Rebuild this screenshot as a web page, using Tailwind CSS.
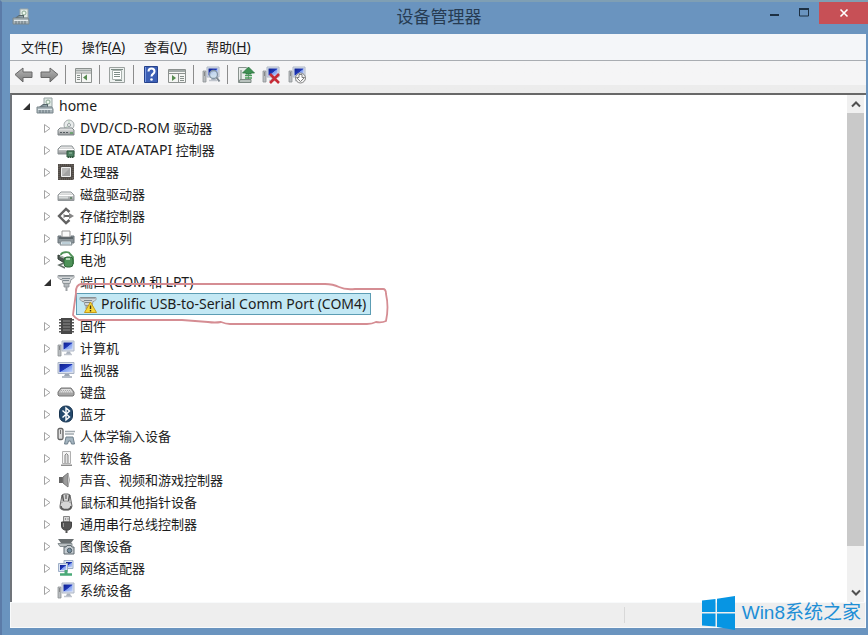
<!DOCTYPE html>
<html lang="zh-CN">
<head>
    <meta charset="UTF-8">
    <meta name="viewport" content="width=device-width, initial-scale=1.0">
    <title>设备管理器</title>
    <script src="https://cdn.jsdelivr.net/npm/@tailwindcss/browser@4"></script>
</head>
<body class="font-['Noto_Sans','Noto_Sans_CJK_SC',sans-serif] text-[13px] text-[#1c1c1c]">

    <!-- Shared icon shapes -->
    <svg class="absolute size-0" aria-hidden="true">
        <defs>
            <linearGradient id="metal" x1="0" y1="0" x2="0" y2="1"><stop offset="0" stop-color="#f4f4f4"/><stop offset="1" stop-color="#8e9294"/></linearGradient>
            <linearGradient id="screen" x1="0" y1="0" x2="1" y2="1"><stop offset="0" stop-color="#0c1f8c"/><stop offset=".5" stop-color="#2038b8"/><stop offset=".55" stop-color="#7f9df0"/><stop offset="1" stop-color="#c3d3fa"/></linearGradient>
            <linearGradient id="arrow-fill" x1="0" y1="0" x2="0" y2="1"><stop offset="0" stop-color="#b5b5b5"/><stop offset="1" stop-color="#7c7c7c"/></linearGradient>
        </defs>
        <symbol id="closed" viewBox="0 0 9 11"><path d="M1.5 1.5L7 5.5L1.5 9.5Z" fill="#fff" stroke="#a3a3a3"/></symbol>
        <symbol id="open" viewBox="0 0 9 11"><path d="M8 2V9H1Z" fill="#303030"/></symbol>
        <symbol id="pc" viewBox="0 0 18 18">
            <path d="M8 1h8v9H8z" fill="#dfe8e4" stroke="#9aa6a6"/><circle cx="12" cy="5" r="2" fill="#eef7ef" stroke="#8aa893"/>
            <path d="M3 10l4-3h5v4H3z" fill="#566469"/><path d="M5 9l3-1h3v2z" fill="#8fa3a8"/>
            <path d="M1 10h15l1 2v4H1z" fill="#aab6bb" stroke="#7b878c"/><path d="M2 12.500h14" stroke="#e3eaec"/><path d="M4 13v3M7 13v3M10 13v3M13 13v3" stroke="#66757c"/>
        </symbol>
        <symbol id="tower" viewBox="0 0 18 18">
            <path d="M1 6h3v11H1z" fill="#b9bdc0" stroke="#8d9294" stroke-width=".8"/><path d="M2 8h1M2 10h1" stroke="#555"/>
            <path d="M5 2h12v10H5z" fill="#dbe2ee" stroke="#aeb7c6"/><path d="M6.500 3.500h9v7h-9z" fill="url(#screen)"/>
            <path d="M10 12.500h3l1 2.500H9z" fill="#a9b1bd"/><path d="M7 15.500h8" stroke="#c1c6ce" stroke-width="1.500"/>
        </symbol>
        <symbol id="serial" viewBox="0 0 18 18">
            <path d="M1 2.500h16v2l-2 2h-1l-1 4H6l-1-4H3L1 4.500z" fill="#d3d6d8" stroke="#969b9f"/>
            <path d="M2 3h14" stroke="#7d8387"/><path d="M5 5.500h8M6 7.500h6" stroke="#7f8a91"/>
            <path d="M7 10.500h5V14H7z" fill="#b3b8bb" stroke="#8a9094" stroke-width=".8"/><path d="M9.500 14v4" stroke="#9da1a4" stroke-width="2"/>
        </symbol>
    </svg>

    <div class="relative flex h-screen flex-col overflow-hidden border-t-2 border-l-2 border-t-[#7f9fb4] border-l-[#5b7ba8] bg-[#6a94bf] pb-[7px] pl-2 pr-0.5">

        <!-- Title bar -->
        <header class="-mr-0.5 grid h-8 grid-cols-[1fr_auto_1fr] text-[#263b52]">
            <svg class="ml-0.5 mt-1.5 size-[18px]"><use href="#pc"/></svg>
            <h1 class="text-[17px] leading-[30px]">设备管理器</h1>
            <div class="flex items-start justify-end">
                <button aria-label="最小化" class="flex h-[22px] w-[30px] items-center justify-center"><svg width="12" height="12"><path d="M2 8h9" stroke="#1d3043" stroke-width="2"/></svg></button>
                <button aria-label="最大化" class="flex h-[22px] w-[30px] items-center justify-center"><svg width="12" height="12"><path d="M1.500 2h9v7h-9z" fill="none" stroke="#1d3043"/><path d="M1 2h10" stroke="#1d3043" stroke-width="2"/></svg></button>
                <button aria-label="关闭" class="flex h-[22px] w-[49px] items-center justify-center bg-[#c75056]"><svg width="10" height="10"><path d="M1.500 1.500l7 7M8.500 1.500l-7 7" stroke="#fff" stroke-width="1.600"/></svg></button>
            </div>
        </header>

        <!-- Menu bar -->
        <nav class="flex h-[27px] shrink-0 items-center gap-[19px] border-b border-[#a9adb2] bg-[#f4f6f9] pl-[11px]">
            <button>文件<span class="text-sm">(<u>F</u>)</span></button>
            <button>操作<span class="text-sm">(<u>A</u>)</span></button>
            <button>查看<span class="text-sm">(<u>V</u>)</span></button>
            <button>帮助<span class="text-sm">(<u>H</u>)</span></button>
        </nav>

        <!-- Toolbar -->
        <div role="toolbar" class="flex h-8 shrink-0 items-start gap-1.5 bg-linear-to-b from-[#f5f5f6] from-75% to-[#ececec] to-75% pl-[3px] pt-1">
            <button aria-label="后退"><svg class="size-5" viewBox="0 0 20 20"><path d="M2 9.500L10 3v4h9v5.500h-9V17z" fill="url(#arrow-fill)" stroke="#686868"/></svg></button>
            <button aria-label="前进"><svg class="size-5" viewBox="0 0 20 20"><path d="M19 9.500L11 3v4H2v5.500h9V17z" fill="url(#arrow-fill)" stroke="#686868"/></svg></button>
            <span class="h-[19px] w-0.5 border-l border-[#8c8c8c]"></span>
            <button aria-label="显示/隐藏控制台树"><svg class="size-5" viewBox="0 0 20 20"><path d="M2.500 3.500h16v14h-16z" fill="#f5f6f4" stroke="#8c918f"/><path d="M3 5.500h15" stroke="#a2aaa8" stroke-width="2"/><path d="M3 8h15M8.500 8v9" stroke="#8c918f"/><path d="M4 10.500h3M4 12.500h3M4 14.500h3" stroke="#87908c"/><path d="M14 9.500v6l-4-3z" fill="#568b4f"/></svg></button>
            <span class="h-[19px] w-0.5 border-l border-[#8c8c8c]"></span>
            <button aria-label="属性"><svg class="size-5" viewBox="0 0 20 20"><path d="M2.500 2.500h15v15h-15z" fill="#edf1ef" stroke="#9ba19f"/><path d="M5.500 5.500h9v9h-9z" fill="#fff" stroke="#a8b1ad"/><path d="M4 4.500h12M7 7.500h6M7 9.500h6M7 11.500h6M8 15.500h7" stroke="#7d8c86"/></svg></button>
            <span class="h-[19px] w-0.5 border-l border-[#8c8c8c]"></span>
            <button aria-label="帮助"><svg class="size-5" viewBox="0 0 20 20"><path d="M3.500 1.500h13v16h-13z" fill="#3c5fb5" stroke="#26428c"/><path d="M4.500 2v15" stroke="#7b9ae0"/><path d="M7.500 6.500c0-4 6-4 6 0c0 2.500-3 2.300-3 5" fill="none" stroke="#fff" stroke-width="2"/><circle cx="10.500" cy="14.500" r="1.300" fill="#fff"/></svg></button>
            <button aria-label="操作窗格"><svg class="size-5" viewBox="0 0 20 20"><path d="M1.500 4.500h17v13h-17z" fill="#f5f6f4" stroke="#8c918f"/><path d="M2 6h16" stroke="#a2aaa8" stroke-width="2"/><path d="M2 8.500h16M11.500 9v8" stroke="#8c918f"/><path d="M13 11.500h4M13 13.500h4M13 15.500h4" stroke="#87908c"/><path d="M5 10v6l4-3z" fill="#568b4f"/></svg></button>
            <span class="h-[19px] w-0.5 border-l border-[#8c8c8c]"></span>
            <button aria-label="扫描检测硬件改动"><svg class="size-5" viewBox="0 0 20 20"><use href="#tower" width="18" height="18" x="1"/><circle cx="12.500" cy="9.500" r="4" fill="#cfe0ee" fill-opacity=".85" stroke="#8293a4" stroke-width="1.300"/><path d="M15.500 12.500l3 4" stroke="#7d8790" stroke-width="2"/></svg></button>
            <span class="h-[19px] w-0.5 border-l border-[#8c8c8c]"></span>
            <button aria-label="更新驱动程序"><svg class="size-5" viewBox="0 0 20 20"><path d="M3.500 2.500h8l2 2v13h-10z" fill="#e9edeb" stroke="#89928e"/><path d="M5 14.500h11v3H4z" fill="#b9c2be" stroke="#7c8983"/><path d="M6 5v9" stroke="#adb8b2" stroke-width="2"/><path d="M13.500 2L19.500 8h-3.500v1H11V8H7.500z" fill="#3e9152" stroke="#2b7240" stroke-width=".8"/><path d="M10 10.500h7M10 13h7" stroke="#479c5a" stroke-width="1.600"/></svg></button>
            <button aria-label="卸载"><svg class="size-5" viewBox="0 0 20 20"><use href="#tower" width="18" height="18" x="1"/><path d="M9 9l9 9M18 9l-9 9" stroke="#c72c37" stroke-width="2.600"/></svg></button>
            <button aria-label="禁用"><svg class="size-5" viewBox="0 0 20 20"><use href="#tower" width="18" height="18" x="1"/><circle cx="13.500" cy="13" r="5" fill="#f0f0f0" stroke="#858585"/><path d="M12 9.500h3v3h2.500l-4 4l-4-4H12z" fill="#fff" stroke="#747474" stroke-width=".9"/></svg></button>
        </div>

        <!-- Device tree -->
        <main class="flex min-h-0 flex-1 overflow-hidden border-t-2 border-l-2 border-t-[#686868] border-l-[#70747a] bg-white">
            <ul role="tree" class="min-w-0 flex-1 leading-[22px] [&_button]:shrink-0">
                <li class="flex h-[22px] items-center gap-[5px] pl-[10px] text-sm"><button aria-label="折叠 home"><svg class="h-[11px] w-[9px]"><use href="#open"/></svg></button><svg class="size-[18px]"><use href="#pc"/></svg>home</li>
                <li class="flex h-[22px] items-center gap-[5px] pl-[31px]"><button aria-label="展开"><svg class="h-[11px] w-[9px]"><use href="#closed"/></svg></button>
                    <svg class="size-[18px]" viewBox="0 0 18 18"><circle cx="12" cy="6" r="5" fill="#e9ecec" stroke="#a4abac"/><circle cx="12" cy="6" r="1.500" fill="#fff" stroke="#929b9e"/><path d="M12 1v3M8 9l3-2" stroke="#b9d2bd"/><path d="M1 11l2-2h12l2 2v5H1z" fill="url(#metal)" stroke="#7e8588"/><path d="M3 13.500h9" stroke="#545c60" stroke-dasharray="2 1"/><path d="M13 14h3" stroke="#5d9f61" stroke-width="1.500"/></svg><p><span class="text-sm leading-5">DVD/CD-ROM</span> 驱动器</p></li>
                <li class="flex h-[22px] items-center gap-[5px] pl-[31px]"><button aria-label="展开"><svg class="h-[11px] w-[9px]"><use href="#closed"/></svg></button>
                    <svg class="size-[18px]" viewBox="0 0 18 18"><path d="M1 8l3-3h11l2 3v5H1z" fill="url(#metal)" stroke="#899092"/><path d="M2 8.500h15" stroke="#fff"/><path d="M10 10h7v6h-7z" fill="#4e8062" stroke="#31583f"/><path d="M11.500 15v2M13.500 15v2M15.500 15v2" stroke="#31583f"/><path d="M12 12h3" stroke="#a0c8aa"/></svg><p><span class="text-sm leading-5">IDE ATA/ATAPI</span> 控制器</p></li>
                <li class="flex h-[22px] items-center gap-[5px] pl-[31px]"><button aria-label="展开"><svg class="h-[11px] w-[9px]"><use href="#closed"/></svg></button>
                    <svg class="size-[18px]" viewBox="0 0 18 18"><path d="M1 1h16v15l-1 1H1z" fill="#504b47"/><path d="M2 2h14v14H2z" fill="none" stroke="#777069" stroke-dasharray="1 1"/><path d="M4.500 4.500h9v9h-9z" fill="#b9b9b8" stroke="#efefef"/><path d="M5 13L13 5v8z" fill="#a3a3a3"/></svg>处理器</li>
                <li class="flex h-[22px] items-center gap-[5px] pl-[31px]"><button aria-label="展开"><svg class="h-[11px] w-[9px]"><use href="#closed"/></svg></button>
                    <svg class="size-[18px]" viewBox="0 0 18 18"><path d="M1 10l3-3h10l3 3v5.500H1z" fill="url(#metal)" stroke="#92979a"/><path d="M2 10.500h14" stroke="#fff"/><path d="M2 12.500h9" stroke="#d7dada" stroke-width="2"/><path d="M13 13h2" stroke="#557d5a" stroke-width="1.500"/></svg>磁盘驱动器</li>
                <li class="flex h-[22px] items-center gap-[5px] pl-[31px]"><button aria-label="展开"><svg class="h-[11px] w-[9px]"><use href="#closed"/></svg></button>
                    <svg class="size-[18px]" viewBox="0 0 18 18"><path d="M12.500 5L9 1.800L2 9l7 7.200l3.500-3.200" fill="none" stroke="#626262" stroke-width="2.400"/><path d="M7 9h6" stroke="#656565" stroke-width="2"/><path d="M12 6l5 3l-5 3z" fill="#858585"/><path d="M7 7v4" stroke="#888"/></svg>存储控制器</li>
                <li class="flex h-[22px] items-center gap-[5px] pl-[31px]"><button aria-label="展开"><svg class="h-[11px] w-[9px]"><use href="#closed"/></svg></button>
                    <svg class="size-[18px]" viewBox="0 0 18 18"><path d="M5 2h8v6H5z" fill="#fafafa" stroke="#999"/><path d="M1 7h3v2h10V7h3v7H1z" fill="#8c959a" stroke="#697278"/><path d="M2 9h14" stroke="#50585d" stroke-width="1.500"/><path d="M4 12h10l1 4H3z" fill="#e1e9ec" stroke="#7c888e"/><path d="M5 14h8" stroke="#98b4c2"/></svg>打印队列</li>
                <li class="flex h-[22px] items-center gap-[5px] pl-[31px]"><button aria-label="展开"><svg class="h-[11px] w-[9px]"><use href="#closed"/></svg></button>
                    <svg class="size-[18px]" viewBox="0 0 18 18"><path d="M1 4l11 5l-3 4L1 8z" fill="#4c5751" stroke="#303c35"/><path d="M3 5l7 3" stroke="#aab5ad" stroke-width="1.500"/><path d="M4 4c0-3 8-4 9-1l3 3v7" fill="none" stroke="#4f9156" stroke-width="1.800"/><rect x="7" y="6" width="9" height="10" rx="3" fill="#4e9258" stroke="#2c6536"/><path d="M9 8h4" stroke="#b2d6b6" stroke-width="2"/><path d="M7 12l-5 2l6 3" fill="none" stroke="#647069" stroke-width="1.500"/></svg>电池</li>
                <li class="flex h-[22px] items-center gap-[5px] pl-[31px]"><button aria-label="折叠"><svg class="h-[11px] w-[9px]"><use href="#open"/></svg></button>
                    <svg class="size-[18px]"><use href="#serial"/></svg><p>端口 <span class="text-sm leading-5">(COM</span> 和 <span class="text-sm leading-5">LPT)</span></p></li>
                <li class="relative flex h-[22px] items-center pl-16">
                    <div aria-selected="true" role="treeitem" class="flex h-[22px] items-center gap-1 border border-[#5c9db4] bg-[#c3e8f4] pl-0.5 pr-1 text-sm leading-5">
                        <svg class="size-[18px]" viewBox="0 0 18 18"><use href="#serial"/><path d="M11.500 7l6 10.500h-12z" fill="#f7d83b" stroke="#c69a1a"/><path d="M11.500 10.500v3.500M11.500 15v1.500" stroke="#3e3514" stroke-width="1.400"/></svg>Prolific USB-to-Serial Comm Port (COM4)
                    </div>
                    <!-- Hand drawn marker around the port -->
                    <svg class="pointer-events-none absolute -top-3 left-[58px] h-[46px] w-[324px]" viewBox="0 0 324 46" fill="none" stroke="#d58d93" stroke-width="1.800"><path d="M6 14Q5 4 11 3H255Q263 3 269 6T285 8H313Q316 8 316 13Q319 26 316 40Q312 42 306 41Q302 43 297 43H160Q156 43 151 41Q145 42 138 41L112 39H9Q5 37 3 34Q4 26 6 12"/></svg>
                </li>
                <li class="flex h-[22px] items-center gap-[5px] pl-[31px]"><button aria-label="展开"><svg class="h-[11px] w-[9px]"><use href="#closed"/></svg></button>
                    <svg class="size-[18px]" viewBox="0 0 18 18"><path d="M4 1h11v16H4z" fill="#484848"/><path d="M3 2v15M16 2v15" stroke="#555" stroke-width="2" stroke-dasharray="1.500 1.500"/><path d="M6 4h7M6 7h7M6 10h7M6 13h7" stroke="#8d8d8d"/></svg>固件</li>
                <li class="flex h-[22px] items-center gap-[5px] pl-[31px]"><button aria-label="展开"><svg class="h-[11px] w-[9px]"><use href="#closed"/></svg></button>
                    <svg class="size-[18px]"><use href="#tower"/></svg>计算机</li>
                <li class="flex h-[22px] items-center gap-[5px] pl-[31px]"><button aria-label="展开"><svg class="h-[11px] w-[9px]"><use href="#closed"/></svg></button>
                    <svg class="size-[18px]" viewBox="0 0 18 18"><path d="M1 1.500h16v11H1z" fill="#d9e0ec" stroke="#a9b3c5"/><path d="M2.500 3h13v8h-13z" fill="url(#screen)"/><path d="M8 13h4l1 2H7z" fill="#9da6b3"/><path d="M5 16h10" stroke="#b5bcc6" stroke-width="2"/></svg>监视器</li>
                <li class="flex h-[22px] items-center gap-[5px] pl-[31px]"><button aria-label="展开"><svg class="h-[11px] w-[9px]"><use href="#closed"/></svg></button>
                    <svg class="size-[18px]" viewBox="0 0 18 18"><path d="M1 9l3-4h10l3 4v3l-1 1H2l-1-1z" fill="#a6a6a6" stroke="#777"/><path d="M2 9.500l2.500-3.500h9L16 9.500z" fill="#dedede"/><path d="M4 7.500h10M3 9h12" stroke="#a8a8a8" stroke-dasharray="1 1"/></svg>键盘</li>
                <li class="flex h-[22px] items-center gap-[5px] pl-[31px]"><button aria-label="展开"><svg class="h-[11px] w-[9px]"><use href="#closed"/></svg></button>
                    <svg class="size-[18px]" viewBox="0 0 18 18"><rect x="2.500" y="1" width="13" height="16" rx="6" fill="#24496c" stroke="#17334f"/><path d="M5.500 5.500l7 6.500L9 15V3l3.500 3l-7 6.500" fill="none" stroke="#fff" stroke-width="1.400"/></svg>蓝牙</li>
                <li class="flex h-[22px] items-center gap-[5px] pl-[31px]"><button aria-label="展开"><svg class="h-[11px] w-[9px]"><use href="#closed"/></svg></button>
                    <svg class="size-[18px]" viewBox="0 0 18 18"><rect x="1" y="1.500" width="5" height="11" rx="1.500" fill="#dedede" stroke="#626262" stroke-width="1.300"/><path d="M3.500 3v4" stroke="#757575"/><path d="M8 4.500h10M8 7h9" stroke="#a1a9ae" stroke-width="1.500"/><path d="M9 10h7l1.500 7h-3l-1-3h-2l-1 3h-3z" fill="#a4b4bf" stroke="#70818d"/></svg>人体学输入设备</li>
                <li class="flex h-[22px] items-center gap-[5px] pl-[31px]"><button aria-label="展开"><svg class="h-[11px] w-[9px]"><use href="#closed"/></svg></button>
                    <svg class="size-[18px]" viewBox="0 0 18 18"><path d="M5.500 2.500h8v12h-8z" fill="#f4f4f4" stroke="#b0b0b0"/><path d="M8 14V6q1.500-3 3 0v8" fill="#dedede" stroke="#858585"/><path d="M4 15.500h11v1.500H4z" fill="#8d8d8d"/></svg>软件设备</li>
                <li class="flex h-[22px] items-center gap-[5px] pl-[31px]"><button aria-label="展开"><svg class="h-[11px] w-[9px]"><use href="#closed"/></svg></button>
                    <svg class="size-[18px]" viewBox="0 0 18 18"><path d="M2 6h4v6H2z" fill="#646464"/><path d="M6 6l5-4v14l-5-4z" fill="#9b9b9b" stroke="#777"/><path d="M11 3q3 6 0 12" fill="#d6d6d6" stroke="#aaa"/></svg>声音、视频和游戏控制器</li>
                <li class="flex h-[22px] items-center gap-[5px] pl-[31px]"><button aria-label="展开"><svg class="h-[11px] w-[9px]"><use href="#closed"/></svg></button>
                    <svg class="size-[18px]" viewBox="0 0 18 18"><path d="M5 2l2-1h4l2 1l2 11q0 3-3 4H6q-4-1-3-4z" fill="#d5d5d5" stroke="#666"/><path d="M5.500 2l1 6M12.500 2l-1 6" stroke="#555" stroke-width="1.500"/><path d="M9 2v4" stroke="#707070" stroke-width="1.500"/><path d="M4 10q5-4 10 0" fill="none" stroke="#999"/><path d="M4 13q0 3 3 3.500h4q3-.5 3-3.500" fill="none" stroke="#595959" stroke-width="1.500"/></svg>鼠标和其他指针设备</li>
                <li class="flex h-[22px] items-center gap-[5px] pl-[31px]"><button aria-label="展开"><svg class="h-[11px] w-[9px]"><use href="#closed"/></svg></button>
                    <svg class="size-[18px]" viewBox="0 0 18 18"><path d="M6.500 1.500h6V7h-6z" fill="#d7d7d7" stroke="#858585"/><path d="M8 4h1M10.500 4h1" stroke="#555"/><path d="M4.500 7h10v4q0 3-3 4h-4q-3-1-3-4z" fill="#555" stroke="#444"/><path d="M6.500 8v4" stroke="#999"/><path d="M9.500 15v3" stroke="#555" stroke-width="2"/></svg>通用串行总线控制器</li>
                <li class="flex h-[22px] items-center gap-[5px] pl-[31px]"><button aria-label="展开"><svg class="h-[11px] w-[9px]"><use href="#closed"/></svg></button>
                    <svg class="size-[18px]" viewBox="0 0 18 18"><path d="M1 2h16l-3 4H4z" fill="#686e70"/><path d="M1 6.500h14v3H3z" fill="#b8bec0" stroke="#868e91"/><path d="M7 10h2l1-1.500h4L15 10h2v7H7z" fill="#c4cbd0" stroke="#606a70"/><circle cx="12.500" cy="13.500" r="2.200" fill="#7590a1" stroke="#4d5c66"/></svg>图像设备</li>
                <li class="flex h-[22px] items-center gap-[5px] pl-[31px]"><button aria-label="展开"><svg class="h-[11px] w-[9px]"><use href="#closed"/></svg></button>
                    <svg class="size-[18px]" viewBox="0 0 18 18"><path d="M7 1.500h9v8H7z" fill="#dae3f1" stroke="#9eafc7"/><path d="M9 3h6v5H9z" fill="url(#screen)"/><path d="M1.500 4.500h9v8h-9z" fill="#dae3f1" stroke="#9eafc7"/><path d="M3 6h6v5H3z" fill="url(#screen)"/><path d="M9 11v4" stroke="#4aa875" stroke-width="3"/><path d="M3 15.500h12" stroke="#49aa77" stroke-width="2.500"/></svg>网络适配器</li>
                <li class="flex h-[22px] items-center gap-[5px] pl-[31px]"><button aria-label="展开"><svg class="h-[11px] w-[9px]"><use href="#closed"/></svg></button>
                    <svg class="size-[18px]"><use href="#tower"/></svg>系统设备</li>
            </ul>

            <!-- Scroll bar -->
            <div class="mr-0.5 flex w-[17px] flex-col bg-[#f0f0f0]">
                <button aria-label="向上滚动" class="flex h-[18px] items-center justify-center"><svg width="10" height="8"><path d="M1 6.500l4-4l4 4" fill="none" stroke="#505050" stroke-width="2"/></svg></button>
                <div class="flex-1"><div class="h-[92%] bg-[#c9c9c9]"></div></div>
                <button aria-label="向下滚动" class="flex h-[18px] items-center justify-center"><svg width="10" height="8"><path d="M1 1.500l4 4l4-4" fill="none" stroke="#505050" stroke-width="2"/></svg></button>
            </div>
        </main>

        <!-- Status bar -->
        <footer class="flex h-[26px] shrink-0 border border-[#f8fafb] bg-[#eeeeee] py-1">
            <div class="flex-1 border-r border-[#d8d8d8]"></div>
            <div class="w-60"></div>
        </footer>

        <!-- Site watermark -->
        <div class="absolute bottom-[5px] right-[7px] flex items-center gap-[7px] font-['Liberation_Sans','Noto_Sans_CJK_SC',sans-serif] text-[19px] leading-[34px] text-[#1e8fd6]">
            <svg class="h-[34px] w-[33px]" viewBox="0 0 33 34" fill="#0795e3"><path d="M0 4.500L13.500 3v13H0zM15 2.800L33 0v16H15zM0 17.500h13.500v13L0 29.500zM15 17.500h18V34l-18-3z"/></svg>
            <span>Win8系统之家</span>
        </div>
    </div>
</body>
</html>
